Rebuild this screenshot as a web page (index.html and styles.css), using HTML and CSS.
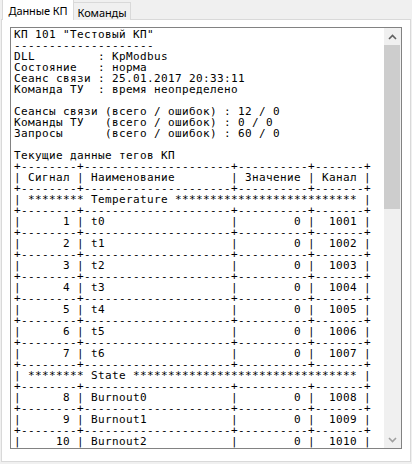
FILE: index.html
```html
<!DOCTYPE html>
<html lang="ru">
<head>
<meta charset="utf-8">
<title>Данные КП</title>
<link rel="stylesheet" href="styles.css">
</head>
<body>
<div class="tabs">
  <div class="tab tab-active">Данные КП</div>
  <div class="tab tab-normal">Команды</div>
</div>
<div class="page">
  <div class="textbox">
<pre class="text">КП 101 "Тестовый КП"
--------------------
DLL         : KpModbus
Состояние   : норма
Сеанс связи : 25.01.2017 20:33:11
Команда ТУ  : время неопределено

Сеансы связи (всего / ошибок) : 12 / 0
Команды ТУ   (всего / ошибок) : 0 / 0
Запросы      (всего / ошибок) : 60 / 0

Текущие данные тегов КП
+--------+---------------------+----------+-------+
| Сигнал | Наименование        | Значение | Канал |
+--------+---------------------+----------+-------+
| ******** Temperature ************************** |
+--------+---------------------+----------+-------+
|      1 | t0                  |        0 |  1001 |
+--------+---------------------+----------+-------+
|      2 | t1                  |        0 |  1002 |
+--------+---------------------+----------+-------+
|      3 | t2                  |        0 |  1003 |
+--------+---------------------+----------+-------+
|      4 | t3                  |        0 |  1004 |
+--------+---------------------+----------+-------+
|      5 | t4                  |        0 |  1005 |
+--------+---------------------+----------+-------+
|      6 | t5                  |        0 |  1006 |
+--------+---------------------+----------+-------+
|      7 | t6                  |        0 |  1007 |
+--------+---------------------+----------+-------+
| ******** State ******************************** |
+--------+---------------------+----------+-------+
|      8 | Burnout0            |        0 |  1008 |
+--------+---------------------+----------+-------+
|      9 | Burnout1            |        0 |  1009 |
+--------+---------------------+----------+-------+
|     10 | Burnout2            |        0 |  1010 |
+--------+---------------------+----------+-------+</pre>
    <div class="scrollbar">
      <div class="sb-btn">
        <svg width="9" height="6" viewBox="0 0 9 6"><path d="M1 5 L4.5 1.5 L8 5" fill="none" stroke="#606060" stroke-width="1.6"/></svg>
      </div>
      <div class="sb-thumb"></div>
      <div class="sb-track"></div>
      <div class="sb-btn">
        <svg width="9" height="6" viewBox="0 0 9 6"><path d="M1 1 L4.5 4.5 L8 1" fill="none" stroke="#a0a0a0" stroke-width="1.6"/></svg>
      </div>
    </div>
  </div>
</div>
</body>
</html>
```
FILE: styles.css
```css
html, body {
  margin: 0;
  padding: 0;
}
body {
  width: 412px;
  height: 464px;
  background: #f0f0f0;
  overflow: hidden;
  font-family: "Noto Sans", "Open Sans", sans-serif;
  font-size: 11px;
  color: #000;
}
.tabs {
  display: flex;
  align-items: flex-end;
  height: 20px;
  padding-left: 2px;
  margin-bottom: -1px;
}
.tab {
  box-sizing: border-box;
  border: 1px solid #d9d9d9;
  border-bottom: none;
  display: flex;
  justify-content: center;
  line-height: 16px;
  white-space: nowrap;
}
.tab-active {
  position: relative;
  z-index: 1;
  width: 72px;
  height: 21px;
  background: #fff;
  padding-top: 3px;
  letter-spacing: -0.1px;
}
.tab-normal {
  width: 58px;
  height: 18px;
  margin-left: -1px;
  background: #f0f0f0;
  padding-top: 2px;
  letter-spacing: -0.1px;
}
.page {
  box-sizing: border-box;
  margin-left: 1px;
  width: 410px;
  height: 443px;
  border: 1px solid #d9d9d9;
  background: #fff;
  padding: 7px 8px 0 8px;
}
.textbox {
  box-sizing: border-box;
  width: 392px;
  height: 422px;
  border: 1px solid #828282;
  background: #fff;
  display: flex;
}
.text {
  flex: 1;
  margin: 0;
  padding: 1px 0 0 3px;
  overflow: hidden;
  font-family: "DejaVu Sans Mono", monospace;
  font-size: 11px;
  letter-spacing: 0.378px;
  line-height: 11px;
  color: #000;
  white-space: pre;
}
.scrollbar {
  width: 17px;
  display: flex;
  flex-direction: column;
  background: #f0f0f0;
}
.sb-btn {
  height: 17px;
  display: flex;
  align-items: center;
  justify-content: center;
}
.sb-thumb {
  height: 164px;
  margin: 0 1px 0 0;
  background: #cdcdcd;
}
.sb-track {
  flex: 1;
}
```
